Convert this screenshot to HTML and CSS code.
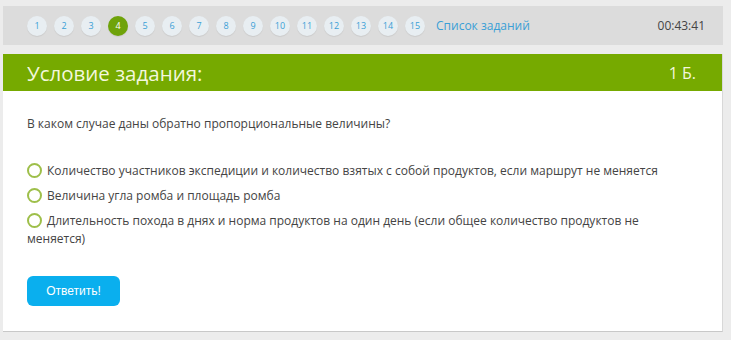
FILE: index.html
```html
<!DOCTYPE html>
<html lang="ru">
<head>
    <meta charset="UTF-8">
    <meta name="viewport" content="width=device-width, initial-scale=1.0">
    <title>Условие задания</title>
    <link rel="stylesheet" href="styles.css">
</head>
<body>
    <div class="nav">
        <div class="pages">
            <span class="num">1</span>
            <span class="num">2</span>
            <span class="num">3</span>
            <span class="num current">4</span>
            <span class="num">5</span>
            <span class="num">6</span>
            <span class="num">7</span>
            <span class="num">8</span>
            <span class="num">9</span>
            <span class="num">10</span>
            <span class="num">11</span>
            <span class="num">12</span>
            <span class="num">13</span>
            <span class="num">14</span>
            <span class="num">15</span>
            <a class="list-link" href="#">Список заданий</a>
        </div>
        <div class="timer">00:43:41</div>
    </div>

    <div class="task">
        <div class="task-head">
            <h1>Условие задания:</h1>
            <span class="points">1 Б.</span>
        </div>
        <div class="task-body">
            <p class="question">В каком случае даны обратно пропорциональные величины?</p>
            <ul class="answers">
                <li><span class="radio"></span>Количество участников экспедиции и количество взятых с собой продуктов, если маршрут не меняется</li>
                <li><span class="radio"></span>Величина угла ромба и площадь ромба</li>
                <li><span class="radio"></span>Длительность похода в днях и норма продуктов на один день (если общее количество продуктов не меняется)</li>
            </ul>
            <button type="button">Ответить!</button>
        </div>
    </div>
</body>
</html>
```

FILE: styles.css
```css
body {
    font-family: "Open Sans", sans-serif;
    background-color: #ececec;
    color: #444;
    margin: 0;
    padding: 6px 8px 0 3px;
}

.nav {
    display: flex;
    align-items: center;
    justify-content: space-between;
    background-color: #dcdcdc;
    height: 39px;
    padding: 0 18px 0 24px;
}

.pages {
    display: flex;
    align-items: center;
    gap: 7px;
}

.num {
    width: 20px;
    height: 20px;
    border-radius: 50%;
    background-color: #e8eef2;
    box-shadow: 0 1px 1px rgba(0, 0, 0, 0.08);
    color: #3a9fd6;
    font-size: 9px;
    line-height: 20px;
    text-align: center;
}

.num.current {
    background-color: #6fa30a;
    color: #fff;
}

.list-link {
    margin-left: 4px;
    color: #3a9fd6;
    font-size: 12px;
    text-decoration: none;
}

.timer {
    font-size: 12px;
    color: #444;
}

.task {
    margin-top: 9px;
    background-color: #fff;
    border-bottom: 1px solid #c8c8c8;
    border-right: 1px solid #d8d8d8;
}

.task-head {
    display: flex;
    align-items: center;
    justify-content: space-between;
    background-color: #76aa00;
    height: 37px;
    padding: 0 26px 0 24px;
    color: #f3f7dc;
}

.task-head h1 {
    margin: 0;
    font-size: 20.5px;
    font-weight: normal;
}

.points {
    font-size: 16px;
}

.task-body {
    padding: 24px 24px 25px;
    font-size: 12px;
}

.question {
    margin: 0 0 30px;
}

.answers {
    list-style: none;
    margin: 0 0 28px;
    padding: 0;
}

.answers li {
    line-height: 18px;
    margin-bottom: 7px;
}

.radio {
    display: inline-block;
    width: 11px;
    height: 11px;
    border: 2px solid #9ebf4a;
    border-radius: 50%;
    margin-right: 5px;
    vertical-align: -3px;
}

button {
    font-family: "Liberation Sans", Arial, sans-serif;
    background-color: #0aafee;
    color: #fff;
    font-size: 12px;
    border: none;
    border-radius: 6px;
    width: 93px;
    height: 30px;
    cursor: pointer;
}

button:hover {
    background-color: #0298d3;
}
```
